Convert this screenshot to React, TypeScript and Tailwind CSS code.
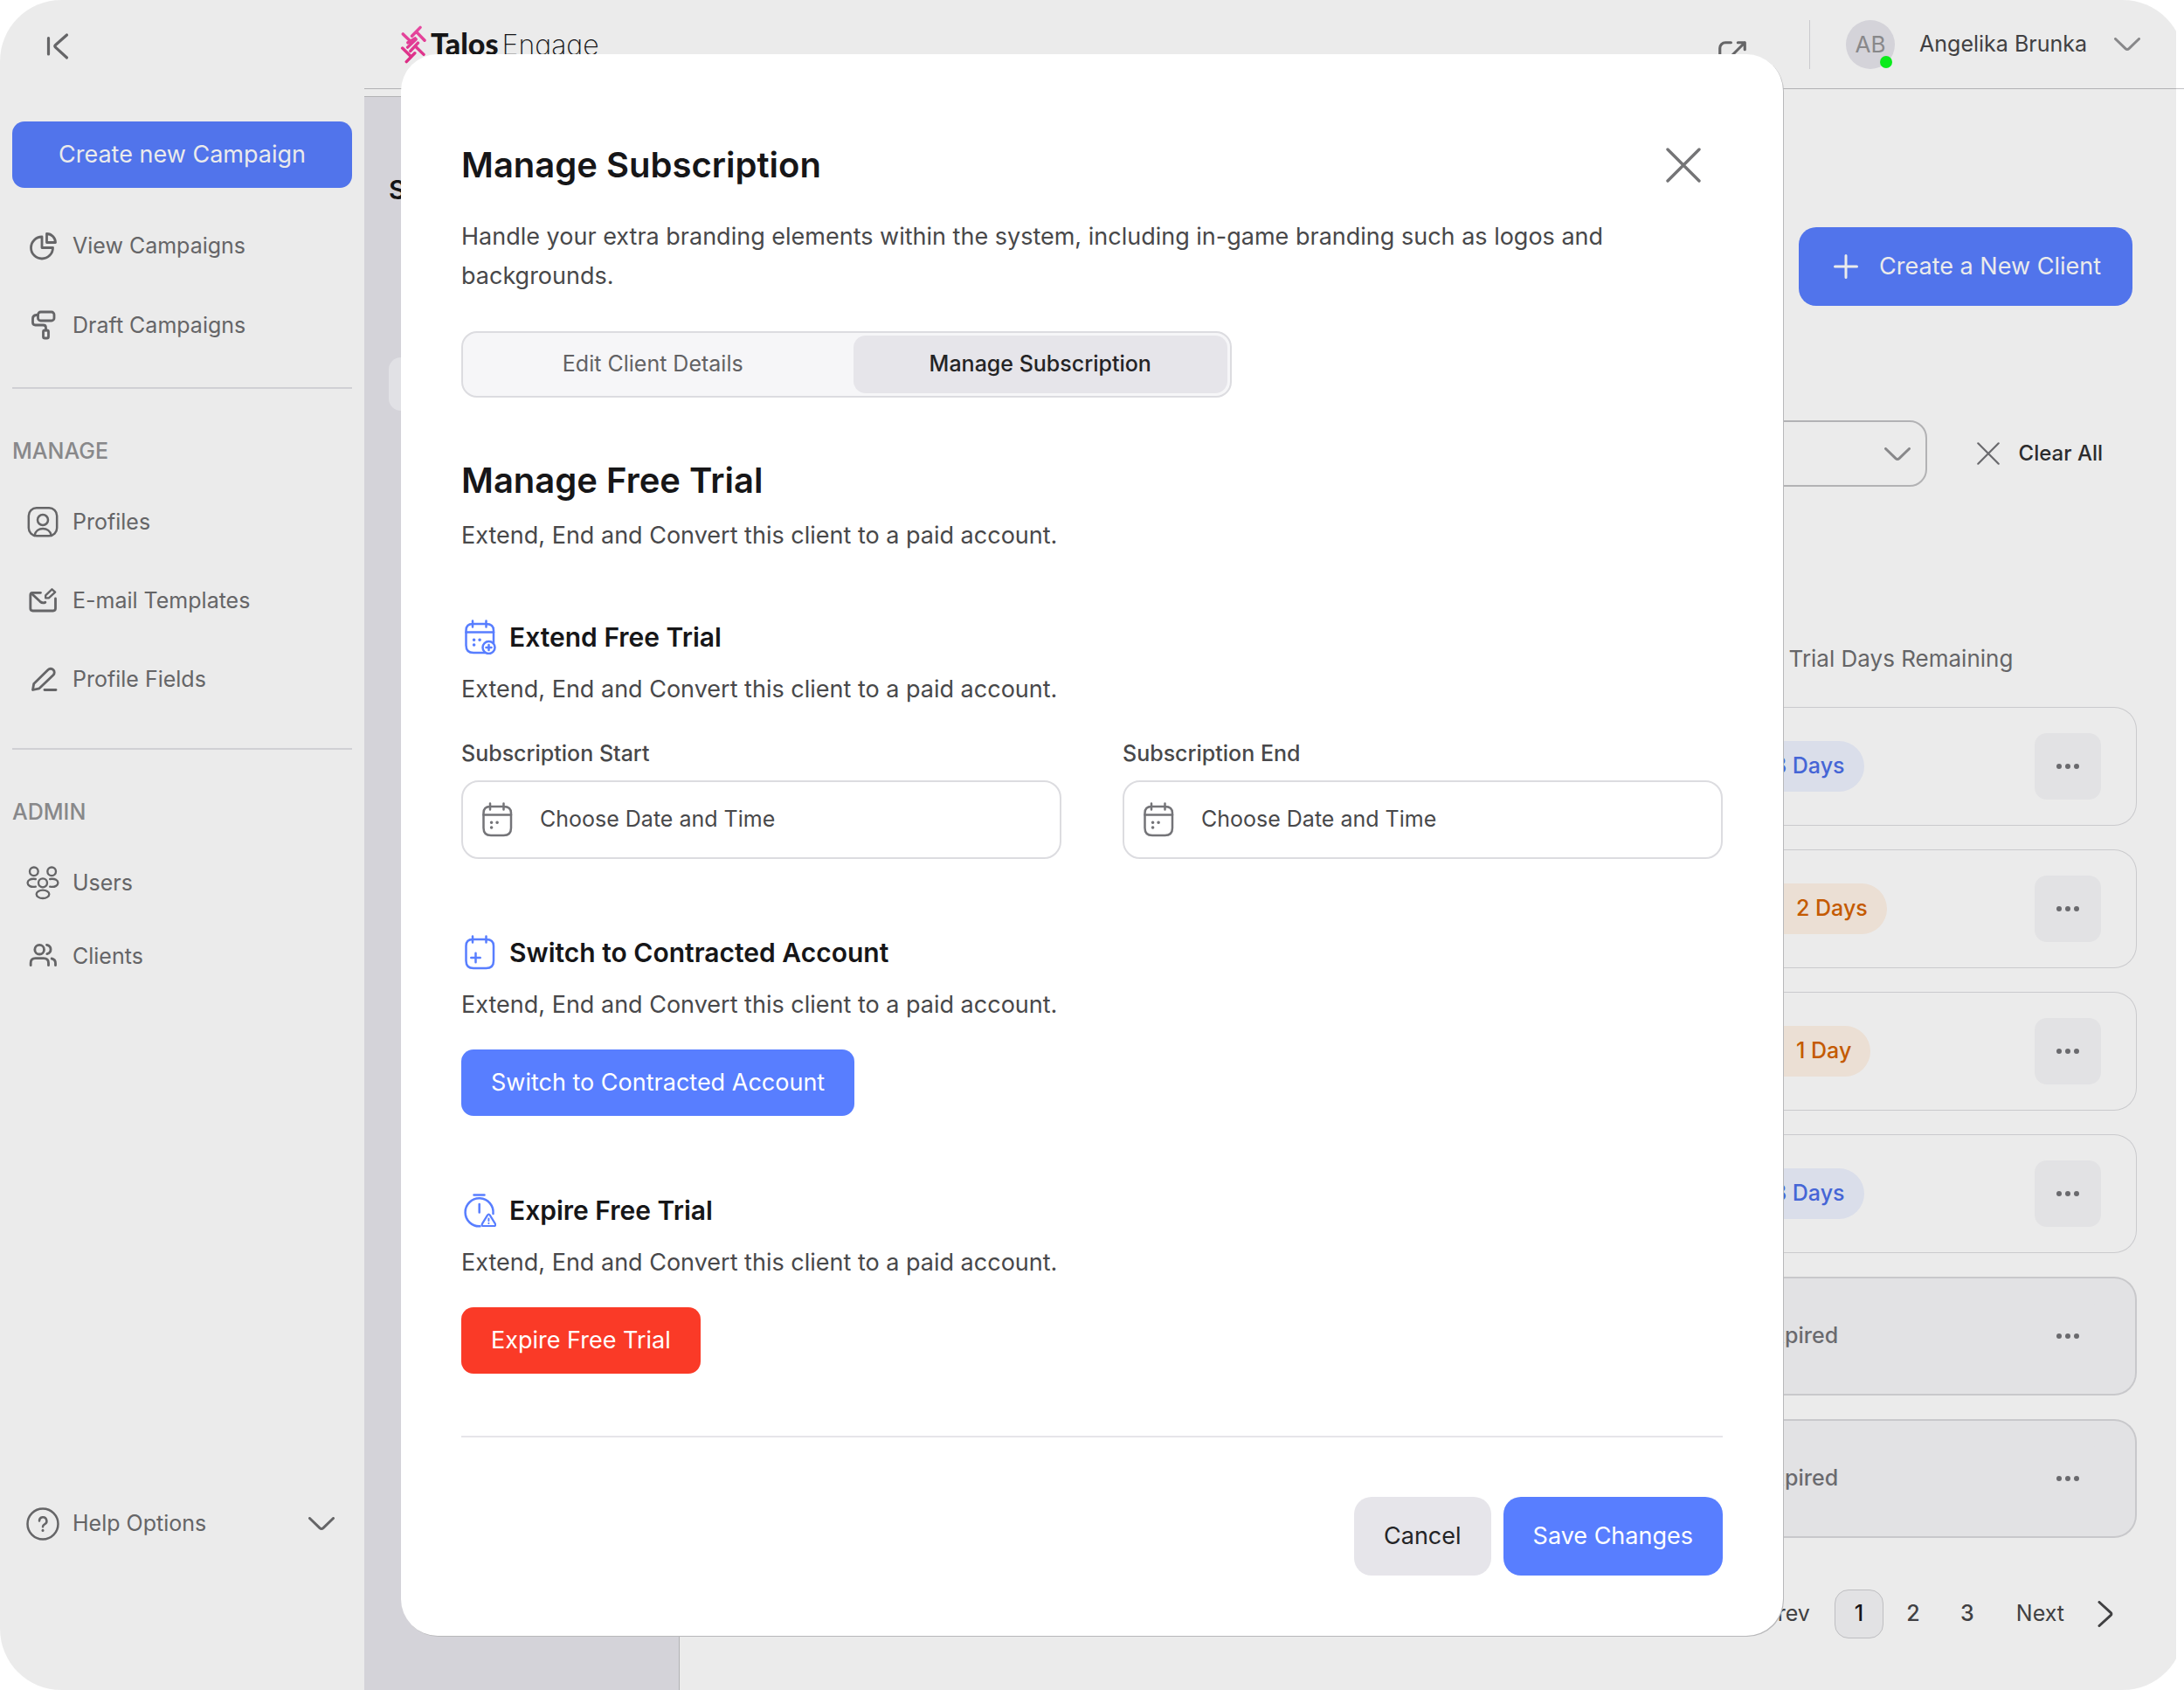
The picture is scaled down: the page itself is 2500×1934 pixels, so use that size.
import type { ReactNode } from "react";

type IconProps = { className?: string };

function Chevron({ className = "" }: IconProps) {
  return (
    <svg viewBox="0 0 30 16" fill="none" stroke="currentColor" strokeWidth="3" strokeLinecap="round" className={`h-4 w-[30px] shrink-0 ${className}`} aria-hidden="true">
      <path d="M1.5 1.5 13 12.6q2 1.8 4 0L28.5 1.5" />
    </svg>
  );
}

function ChevronRight() {
  return (
    <svg viewBox="0 0 30 30" fill="none" stroke="currentColor" strokeWidth="3" strokeLinecap="round" className="size-[30px] shrink-0" aria-hidden="true">
      <path d="M8 1.5 21 13.4q1.8 1.6 0 3.2L8 28.5" />
    </svg>
  );
}

function Cross({ className = "" }: IconProps) {
  return (
    <svg viewBox="0 0 40 40" fill="none" stroke="currentColor" strokeWidth="3.4" strokeLinecap="round" className={`shrink-0 ${className}`} aria-hidden="true">
      <path d="M2 2l36 36M38 2 2 38" />
    </svg>
  );
}

function NavSvg({ viewBox = "0 0 36 36", stroke = 2.8, children }: { viewBox?: string; stroke?: number; children: ReactNode }) {
  return (
    <svg viewBox={viewBox} fill="none" stroke="currentColor" strokeWidth={stroke} strokeLinecap="round" strokeLinejoin="round" className="size-9 shrink-0 overflow-visible" aria-hidden="true">
      {children}
    </svg>
  );
}

const PieIcon = () => (
  <NavSvg>
    <path d="M17 8A12.5 12.5 0 1 0 29.5 20.5H17Z" />
    <path d="M22.5 4.5v10h10a10 10 0 0 0-10-10Z" />
  </NavSvg>
);
const RollerIcon = () => (
  <NavSvg>
    <rect x="12.5" y="3" width="18.5" height="10" rx="3" />
    <path d="M12.5 6.5H10.5Q6.5 7 6.5 10.5V15q0 3 3 3h9q3 0 3 3v3" />
    <rect x="18.5" y="24" width="6" height="9" rx="1.8" />
  </NavSvg>
);
const ProfileIcon = () => (
  <NavSvg viewBox="49.5 27 108 108" stroke={7.5}>
    <rect x="55" y="34" width="97" height="96" rx="27" />
    <circle cx="103.5" cy="75" r="18" />
    <path d="M75 129C80 97 127 97 133 129" />
  </NavSvg>
);
const MailIcon = () => (
  <NavSvg viewBox="49.5 300 108 108" stroke={8.5}>
    <path d="M96 328H69a8 8 0 0 0-8 8v46a8 8 0 0 0 8 8h70a8 8 0 0 0 8-8v-34" />
    <path d="M64 330l30 28q8 7 18 3" />
    <path d="M113 346v-9l22-21 11 10-22 20Z" strokeWidth="7" />
  </NavSvg>
);
const PencilIcon = () => (
  <NavSvg>
    <path d="M6.5 30.500l1.200-7L24 7.500a4.200 4.200 0 0 1 6 6L14 28.800Z" />
    <path d="M20 30.500h13" />
  </NavSvg>
);
const UsersIcon = () => (
  <NavSvg viewBox="49.5 36 108 108" stroke={7}>
    <circle cx="73" cy="52" r="14.500" />
    <circle cx="134" cy="52" r="14.500" />
    <circle cx="103.500" cy="91" r="15" />
    <ellipse cx="103.500" cy="130" rx="22" ry="14" />
    <path d="M79 78C42 72 42 110 79 104M128 78c37-6 37 32 0 26" />
  </NavSvg>
);
const ClientsIcon = () => (
  <NavSvg viewBox="49.5 288 108 108" stroke={8.5}>
    <circle cx="92" cy="320" r="16" />
    <path d="M117 304c18 4 18 26 1 31" />
    <path d="M62 374v-8q0-16 16-16h28q17 0 17 16v8" />
    <path d="M134 351q13 3 13 16v7" />
  </NavSvg>
);
const HelpIcon = () => (
  <NavSvg stroke={2.5}>
    <circle cx="18" cy="18" r="17.500" />
    <path d="M14 14.500a4.200 4.200 0 1 1 6 3.800q-2 1-2 3" />
    <path d="M18 25.300v.2" strokeWidth="3" />
  </NavSvg>
);

function SectionSvg({ children }: { children: ReactNode }) {
  return (
    <svg viewBox="0 0 40 40" fill="none" stroke="currentColor" strokeWidth="2.500" strokeLinecap="round" strokeLinejoin="round" className="size-10 shrink-0" aria-hidden="true">
      {children}
    </svg>
  );
}

const CalendarBody = () => <path d="M13 1.500v7M28.500 1.500v7M13 5Q5.500 5 5.500 12.500V29.500Q5.500 38 14 38H28.500Q37 38 37 29.500V12.500Q37 5 28.500 5Z" />;
const CalendarDots = () => (
  <>
    <path d="M5.500 14.500H37" />
    <path d="M14.500 23.300h.2M21 23.300h.2M14.500 29h.2" strokeWidth="3.400" />
  </>
);
const CalendarIcon = () => (
  <SectionSvg>
    <CalendarBody />
    <CalendarDots />
  </SectionSvg>
);
const CalendarAddIcon = () => (
  <SectionSvg>
    <CalendarBody />
    <CalendarDots />
    <circle cx="31.500" cy="32" r="7" fill="white" />
    <path d="M31.500 29v6M28.500 32h6" />
  </SectionSvg>
);
const CalendarPlusIcon = () => (
  <SectionSvg>
    <CalendarBody />
    <path d="M16.500 20.800v10.400M11.300 26h10.400" />
  </SectionSvg>
);
const TimerAlertIcon = () => (
  <SectionSvg>
    <path d="M14.500 2.500h12M36.500 24A16 16 0 1 0 21.500 38.300M20.700 13v9.500" />
    <path d="M30 25.600q1.400-2.200 2.800 0l6 9.800q1.200 2.600-1.600 2.600H25.600q-2.800 0-1.600-2.600Z" strokeWidth="2.200" />
    <path d="M31.400 29.500v2.500M31.400 34.800v.1" strokeWidth="2" />
  </SectionSvg>
);

function Logo() {
  return (
    <div className="flex items-center gap-1" aria-label="Talos Engage">
      <svg viewBox="56 50 94 136" fill="none" stroke="url(#talos-mark)" strokeWidth="10.500" strokeLinecap="round" className="h-[45px] w-[31px]" aria-hidden="true">
        <defs>
          <linearGradient id="talos-mark" gradientUnits="userSpaceOnUse" x1="0" y1="55" x2="0" y2="182">
            <stop offset="0" stopColor="#fb52b0" />
            <stop offset="1" stopColor="#ef3090" />
          </linearGradient>
        </defs>
        <path d="M66 83 92 108M83 113 108 98M97 90 126 60M113 76 141 105M82 129 111 101M64 132 91 158M92 142 118 114M108 125 138 154M78 179 107 149" />
      </svg>
      <div className="flex items-baseline gap-1 text-[#18181a]">
        <span className="font-['Lato',sans-serif] text-[34px] leading-10 font-black">Talos</span>
        <span className="text-[32px] leading-10 font-extralight">Engage</span>
      </div>
    </div>
  );
}

function NavLink({ icon, children }: { icon: ReactNode; children: ReactNode }) {
  return (
    <a href="#" className="flex h-9 items-center gap-4 pl-[17px] text-[25px] leading-9 text-[#6e6e70]">
      {icon}
      {children}
    </a>
  );
}

function Sidebar() {
  return (
    <aside className="flex w-[417px] shrink-0 flex-col px-3.5 pt-[35px] pb-[172px]">
      <button type="button" aria-label="Collapse sidebar" className="ml-[34px] size-9 text-[#6e6e70]">
        <NavSvg stroke={3.2}>
          <path d="M7.500 8.500v18.500M28.500 5 15.500 16.500q-1.500 1.300 0 2.600L28.500 31" />
        </NavSvg>
      </button>
      <button type="button" className="mt-[68px] h-[76px] rounded-[14px] bg-[#587eff] text-[27px] text-white">
        Create new Campaign
      </button>
      <nav className="flex flex-col gap-[55px] pt-12">
        <NavLink icon={<PieIcon />}>View Campaigns</NavLink>
        <NavLink icon={<RollerIcon />}>Draft Campaigns</NavLink>
      </nav>
      <hr className="mt-[53px] border-t-2 border-[#e2e2e7]" />
      <h2 className="mt-[53px] text-[25px] leading-9 font-medium text-[#949496]">MANAGE</h2>
      <nav className="flex flex-col gap-[54px] pt-[45px]">
        <NavLink icon={<ProfileIcon />}>Profiles</NavLink>
        <NavLink icon={<MailIcon />}>E-mail Templates</NavLink>
        <NavLink icon={<PencilIcon />}>Profile Fields</NavLink>
      </nav>
      <hr className="mt-[61px] border-t-2 border-[#e2e2e7]" />
      <h2 className="mt-[53px] text-[25px] leading-9 font-medium text-[#949496]">ADMIN</h2>
      <nav className="flex flex-col gap-12 pt-[45px]">
        <NavLink icon={<UsersIcon />}>Users</NavLink>
        <NavLink icon={<ClientsIcon />}>Clients</NavLink>
      </nav>
      <button type="button" className="mt-auto flex h-9 items-center gap-4 pr-5 pl-[17px] text-[25px] text-[#6e6e70]">
        <HelpIcon />
        Help Options
        <Chevron className="ml-auto" />
      </button>
    </aside>
  );
}

function Header() {
  return (
    <header className="flex h-[102px] shrink-0 items-center border-b border-[#c2c2c4] pr-[50px] pl-[41px]">
      <Logo />
      <a href="#" aria-label="Open in new window" className="mb-[19px] ml-auto self-end text-[#6e6e70]">
        <svg viewBox="0 0 24 24" fill="none" stroke="currentColor" strokeWidth="2" strokeLinecap="round" strokeLinejoin="round" className="size-[38px]" aria-hidden="true">
          <path d="M21 13v6a2 2 0 0 1-2 2H5a2 2 0 0 1-2-2V7a4 4 0 0 1 4-4h4M21 3l-9 9M16 3h5v5" />
        </svg>
      </a>
      <div className="ml-[69px] h-14 w-px bg-[#dcdce0]" />
      <button type="button" className="ml-[41px] flex items-center gap-7 text-[25px] text-[#464648]">
        <span className="relative flex size-14 items-center justify-center rounded-full bg-[#e6e5ec] text-[26px] text-[#949496]">
          AB
          <span className="absolute right-[3px] bottom-px size-3.5 rounded-full bg-[#0bff1e]" />
        </span>
        Angelika Brunka
        <Chevron className="ml-[3px] text-[#949496]" />
      </button>
    </header>
  );
}

type Client = { status: "ok" | "warn" | "expired"; label: string };

const clients: Client[] = [
  { status: "ok", label: "28 Days" },
  { status: "warn", label: "2 Days" },
  { status: "warn", label: "1 Day" },
  { status: "ok", label: "28 Days" },
  { status: "expired", label: "Expired" },
  { status: "expired", label: "Expired" },
];

const pill = {
  ok: "bg-[#edf1fe] text-[#4b6ee9]",
  warn: "bg-[#fff2e6] text-[#d56200]",
  expired: "text-[#747478]",
};
const rowCell = {
  ok: "border-y border-[#dcdcdf]",
  warn: "border-y border-[#dcdcdf]",
  expired: "border-y-2 border-[#dadadd] bg-[#f6f6f8]",
};
const rowEnd = { ok: "border-r", warn: "border-r", expired: "border-r-2" };
const rowStart = { ok: "border-l", warn: "border-l", expired: "border-l-2" };

function ClientTable() {
  return (
    <table className="mt-[140px] w-full border-separate border-spacing-x-0 border-spacing-y-[27px]">
      <thead>
        <tr className="h-[58px] text-left text-[26px] text-[#6e6e70]">
          <td />
          <th scope="col" className="w-[343px] p-0 font-normal whitespace-nowrap">Free Trial Days Remaining</th>
          <td className="w-[117px]" />
        </tr>
      </thead>
      <tbody>
        {clients.map((c, i) => (
          <tr key={i} className="h-[136px]">
            <td className={`rounded-l-[26px] ${rowCell[c.status]} ${rowStart[c.status]}`} />
            <td className={`p-0 pl-1.5 ${rowCell[c.status]}`}>
              <span className={`inline-flex h-[58px] items-center rounded-full px-[22px] text-[25px] font-medium ${pill[c.status]}`}>
                {c.status === "warn" && (
                  <svg viewBox="0 0 28 28" fill="none" stroke="currentColor" strokeWidth="2.500" strokeLinecap="round" className="mr-3.5 size-7" aria-hidden="true">
                    <circle cx="14" cy="14" r="12" />
                    <path d="M14 8v7M14 20v.1" />
                  </svg>
                )}
                {c.label}
              </span>
            </td>
            <td className={`rounded-r-[26px] p-0 ${rowCell[c.status]} ${rowEnd[c.status]}`}>
              <button type="button" aria-label="Client actions" className="flex size-[76px] items-center justify-center rounded-[14px] bg-[#f6f6f8] text-[#747478]">
                <svg viewBox="0 0 28 8" fill="currentColor" className="h-2 w-7" aria-hidden="true">
                  <circle cx="4" cy="4" r="3" />
                  <circle cx="14" cy="4" r="3" />
                  <circle cx="24" cy="4" r="3" />
                </svg>
              </button>
            </td>
          </tr>
        ))}
      </tbody>
    </table>
  );
}

function ClientsPage() {
  return (
    <main className="flex min-w-0 grow flex-col border-l border-[#c2c2c4] pr-[54px] pl-[41px]">
      <button type="button" className="mt-[158px] mr-[5px] flex h-[90px] items-center gap-6 self-end rounded-[20px] bg-[#587eff] pr-[36px] pl-[40px] text-[27px] text-white">
        <svg viewBox="0 0 28 28" fill="none" stroke="currentColor" strokeWidth="3" strokeLinecap="round" className="size-7" aria-hidden="true">
          <path d="M14 1.500v25M1.500 14h25" />
        </svg>
        Create a New Client
      </button>
      <div className="mt-[131px] flex items-center pr-[39px]">
        <div className="relative grow">
          <select aria-label="Filter clients" className="block h-[76px] w-full appearance-none rounded-[20px] border-2 border-[#c2c2c4] bg-transparent px-6 text-[25px]" />
          <Chevron className="pointer-events-none absolute top-[31px] right-[19px] text-[#949496]" />
        </div>
        <button type="button" className="ml-[57px] flex items-center gap-[22px] text-[24px] font-medium text-[#303032]">
          <Cross className="size-[26px] text-[#747478]" />
          Clear All
        </button>
      </div>
      <ClientTable />
      <nav aria-label="Pagination" className="mt-8 flex items-center justify-end pr-[21px] text-[25px] text-[#464648]">
        <button type="button" className="mr-7">Prev</button>
        <div className="flex gap-1.5 font-medium">
          <button type="button" aria-current="page" className="size-14 rounded-2xl border border-[#cfcfd2] bg-[#f6f6f8] text-[#18181a]">1</button>
          <button type="button" className="size-14">2</button>
          <button type="button" className="size-14">3</button>
        </div>
        <button type="button" className="ml-7 flex items-center gap-8">
          Next
          <ChevronRight />
        </button>
      </nav>
    </main>
  );
}

function DateField({ id, label }: { id: string; label: string }) {
  return (
    <div className="min-w-0 flex-1">
      <label htmlFor={id} className="block text-[25px] leading-9 font-medium text-[#48484a]">{label}</label>
      <div className="mt-[13px] flex h-[90px] items-center gap-[30px] rounded-[20px] border-2 border-[#dcdce0] pl-[18px] text-[#747478]">
        <CalendarIcon />
        <input id={id} type="text" placeholder="Choose Date and Time" className="min-w-0 grow bg-transparent pr-6 text-[25px] text-[#48484a] outline-none placeholder:text-[#48484a]" />
      </div>
    </div>
  );
}

function SectionTitle({ icon, children }: { icon: ReactNode; children: ReactNode }) {
  return (
    <h3 className="flex items-center gap-[15px] text-[30px] leading-10 font-semibold text-[#161618]">
      <span className="text-[#587eff]">{icon}</span>
      {children}
    </h3>
  );
}

function Note({ children }: { children: ReactNode }) {
  return <p className="mt-[17px] text-[27px] leading-[45px] text-[#48484a]">{children}</p>;
}

function SubscriptionDialog() {
  return (
    <div role="dialog" aria-modal="true" aria-labelledby="dialog-title" className="w-full max-w-[1582px] rounded-[42px] bg-white px-[69px] pt-[99px] pb-[69px] shadow-[1px_1px_0_#b8b8ba]">
      <div className="flex items-center justify-between">
        <h1 id="dialog-title" className="text-[40px] leading-[56px] font-semibold text-[#161618]">Manage Subscription</h1>
        <button type="button" aria-label="Close" className="mr-[25px] text-[#747476]">
          <Cross className="size-10" />
        </button>
      </div>
      <p className="mt-[31px] max-w-[1340px] text-[27px] leading-[45px] text-[#48484a]">
        Handle your extra branding elements within the system, including in-game branding such as logos and backgrounds.
      </p>
      <div role="tablist" className="mt-[41px] flex h-[76px] w-[882px] max-w-full gap-[15px] rounded-[18px] border-2 border-[#dcdce0] bg-[#f6f6f8] p-[3px] text-[25px]">
        <button type="button" role="tab" aria-selected="false" className="flex-1 rounded-[14px] text-[#626264]">Edit Client Details</button>
        <button type="button" role="tab" aria-selected="true" className="flex-1 rounded-[14px] bg-[#e6e5ea] font-medium text-[#242426]">Manage Subscription</button>
      </div>

      <h2 className="mt-[67px] text-[40px] leading-[56px] font-semibold text-[#161618]">Manage Free Trial</h2>
      <p className="mt-3 text-[27px] leading-[45px] text-[#48484a]">Extend, End and Convert this client to a paid account.</p>

      <section className="mt-[74px]">
        <SectionTitle icon={<CalendarAddIcon />}>Extend Free Trial</SectionTitle>
        <Note>Extend, End and Convert this client to a paid account.</Note>
        <div className="mt-[33px] flex gap-[70px]">
          <DateField id="subscription-start" label="Subscription Start" />
          <DateField id="subscription-end" label="Subscription End" />
        </div>
      </section>

      <section className="mt-[87px]">
        <SectionTitle icon={<CalendarPlusIcon />}>Switch to Contracted Account</SectionTitle>
        <Note>Extend, End and Convert this client to a paid account.</Note>
        <button type="button" className="mt-[29px] h-[76px] rounded-[14px] bg-[#587eff] px-[34px] text-[27px] text-white">Switch to Contracted Account</button>
      </section>

      <section className="mt-[88px]">
        <SectionTitle icon={<TimerAlertIcon />}>Expire Free Trial</SectionTitle>
        <Note>Extend, End and Convert this client to a paid account.</Note>
        <button type="button" className="mt-[29px] h-[76px] rounded-[14px] bg-[#fa3a27] px-[34px] text-[27px] text-white">Expire Free Trial</button>
      </section>

      <div className="mt-[71px] flex justify-end gap-3.5 border-t-2 border-[#e6e5ea] pt-[68px] text-[27px]">
        <button type="button" className="h-[90px] rounded-[20px] bg-[#e6e5ea] px-[34px] text-[#242426]">Cancel</button>
        <button type="button" className="h-[90px] rounded-[20px] bg-[#587eff] px-[34px] text-white">Save Changes</button>
      </div>
    </div>
  );
}

export default function App() {
  return (
    <div className="bg-white font-['Inter',sans-serif]">
      <div className="relative flex min-h-screen overflow-hidden rounded-[70px] bg-white">
        <Sidebar />
        <div className="flex min-w-0 grow flex-col">
          <Header />
          <div className="flex grow">
            <aside className="mt-2 w-[360px] shrink-0 border-t border-[#c2c2c4] bg-[#e6e5ec] px-7 pt-[86px]">
              <h2 className="text-[30px] leading-10 font-semibold text-[#161618]">Site</h2>
              <div className="mt-[172px] h-[61px] rounded-[14px] bg-[#f5f5f9]" />
            </aside>
            <ClientsPage />
          </div>
        </div>
        <div className="absolute inset-y-0 right-[9px] left-0 bg-black/8" />
        <div className="absolute inset-0 flex items-center justify-center">
          <SubscriptionDialog />
        </div>
      </div>
    </div>
  );
}
